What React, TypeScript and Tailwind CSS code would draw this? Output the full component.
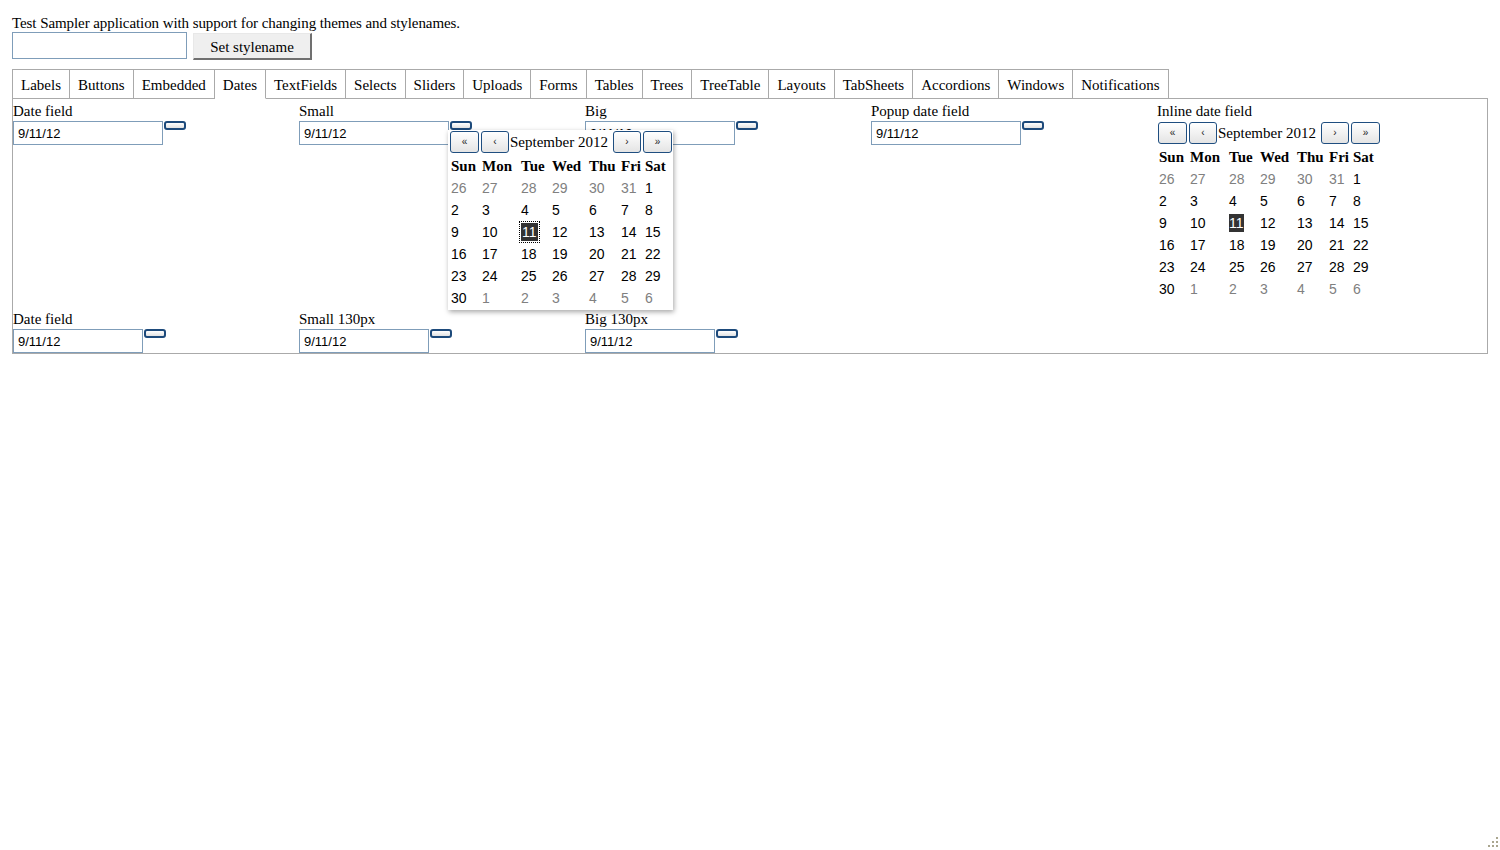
const tabs = [
  "Labels", "Buttons", "Embedded", "Dates", "TextFields", "Selects", "Sliders", "Uploads",
  "Forms", "Tables", "Trees", "TreeTable", "Layouts", "TabSheets", "Accordions", "Windows", "Notifications",
];

const dayNames = ["Sun", "Mon", "Tue", "Wed", "Thu", "Fri", "Sat"];
const colWidths = ["w-[31px]", "w-[39px]", "w-[31px]", "w-[37px]", "w-[32px]", "w-[24px]", "w-[26px]"];

type Day = { n: number; other?: boolean };

const weeks: Day[][] = [
  [26, 27, 28, 29, 30, 31].map((n) => ({ n, other: true })).concat([{ n: 1 }]),
  [2, 3, 4, 5, 6, 7, 8].map((n) => ({ n })),
  [9, 10, 11, 12, 13, 14, 15].map((n) => ({ n })),
  [16, 17, 18, 19, 20, 21, 22].map((n) => ({ n })),
  [23, 24, 25, 26, 27, 28, 29].map((n) => ({ n })),
  [{ n: 30 }].concat([1, 2, 3, 4, 5, 6].map((n) => ({ n, other: true }))),
];

const serif = "font-['Liberation_Serif',serif]";
const sans = "font-['Liberation_Sans',Arial,sans-serif]";

function NavButton({ label, wide }: { label: string; wide?: boolean }) {
  return (
    <button
      className={`${wide ? "w-[29px]" : "w-[28px]"} h-[22px] shrink-0 rounded-[3px] border border-[#1f4e80] bg-gradient-to-b from-white to-[#e4e4e4] flex items-center justify-center text-[10px] leading-none text-[#222] ${sans}`}
    >
      {label}
    </button>
  );
}

function TinyButton() {
  return (
    <button className="ml-[1px] w-[22px] h-[9px] rounded-[3px] border-2 border-[#1d4a7b] bg-gradient-to-b from-white to-[#e2e2e2]" />
  );
}

function DateInput({ width }: { width: string }) {
  return (
    <div className="flex items-start">
      <div
        className={`${width} h-[24px] border border-[#7f9db9] bg-white px-[4px] pt-[1px] flex items-center text-[13px] text-black ${sans}`}
      >
        9/11/12
      </div>
      <TinyButton />
    </div>
  );
}

function Calendar({ popup }: { popup?: boolean }) {
  return (
    <div className={popup ? "pl-[2px]" : "ml-[1px] mt-[1px]"}>
      <div className="flex items-center h-[22px]">
        <NavButton label="«" wide />
        <div className="ml-[2px]">
          <NavButton label="‹" />
        </div>
        <div className={`w-[104px] pl-[1px] text-[15px] leading-[22px] whitespace-nowrap overflow-hidden ${serif}`}>
          September 2012
        </div>
        <NavButton label="›" />
        <div className="ml-[2px]">
          <NavButton label="»" wide />
        </div>
      </div>
      <div className="ml-[1px]">
        <div className="flex h-[24px] items-center pt-[2px]">
          {dayNames.map((d, i) => (
            <div key={d} className={`${colWidths[i]} text-[15px] font-bold ${serif}`}>
              {d}
            </div>
          ))}
        </div>
        {weeks.map((week, wi) => (
          <div key={wi} className="flex h-[22px] items-center">
            {week.map((day, di) => {
              const selected = !day.other && day.n === 11;
              return (
                <div key={di} className={`${colWidths[di]} text-[14px] ${sans}`}>
                  {selected ? (
                    <span
                      className={`inline-block bg-[#333] text-white leading-[18px] ${
                        popup
                          ? "outline outline-1 outline-dotted outline-black outline-offset-[1px] px-[1px]"
                          : "px-[0px]"
                      }`}
                    >
                      {day.n}
                    </span>
                  ) : (
                    <span className={day.other ? "text-[#808080]" : "text-black"}>{day.n}</span>
                  )}
                </div>
              );
            })}
          </div>
        ))}
      </div>
    </div>
  );
}

function Field({ label, width, children }: { label: string; width: string; children?: React.ReactNode }) {
  return (
    <div className="relative">
      <div className={`h-[22px] pt-[2px] flex items-center text-[15px] ${serif}`}>{label}</div>
      <DateInput width={width} />
      {children}
    </div>
  );
}

function ResizeGrip() {
  const dots = [
    [9, 0], [5, 4], [9, 4], [1, 8], [5, 8], [9, 8],
  ];
  return (
    <svg width="12" height="11" viewBox="0 0 12 11" className="absolute right-[1px] bottom-[2px]">
      {dots.map(([x, y], i) => (
        <rect key={i} x={x} y={y} width="2" height="2" fill="#aaa68f" />
      ))}
    </svg>
  );
}

export default function App() {
  return (
    <div className={`relative h-[850px] bg-white text-black px-[12px] ${serif}`}>
      <div className="h-[32px] pt-[15px] text-[15px] leading-[17px] tracking-[-0.08px]">
        Test Sampler application with support for changing themes and stylenames.
      </div>
      <div className="flex items-start h-[28px]">
        <input className="w-[175px] h-[27px] border border-[#7f9db9] bg-white outline-none" />
        <button
          className={`ml-[6px] mt-[1px] w-[119px] h-[27px] pt-[2px] bg-[#efefef] border-t border-l border-t-[#e8e8e8] border-l-[#e8e8e8] border-r-2 border-b-2 border-r-[#707070] border-b-[#707070] text-[15px] ${serif}`}
        >
          Set stylename
        </button>
      </div>

      <div className="mt-[9px] flex">
        {tabs.map((t, i) => (
          <div
            key={t}
            className={`h-[30px] px-[8px] pt-[2px] flex items-center text-[15px] whitespace-nowrap border-t border-r border-[#aaa] ${
              i === 0 ? "border-l" : ""
            } ${t === "Dates" ? "border-b border-b-white" : "border-b"}`}
          >
            {t}
          </div>
        ))}
        <div className="flex-1 h-[30px] border-b border-[#aaa]" />
      </div>

      <div className="border-x border-b border-[#aaa] w-[1476px]">
        <div className="grid grid-cols-[286px_286px_286px_286px_1fr] h-[208px]">
          <Field label="Date field" width="w-[150px]" />
          <Field label="Small" width="w-[150px]">
            <div className="absolute left-[149px] top-[31px] z-10 w-[225px] h-[180px] bg-white shadow-[1px_2px_5px_rgba(0,0,0,0.35)] pt-[1px]">
              <Calendar popup />
            </div>
          </Field>
          <Field label="Big" width="w-[150px]" />
          <Field label="Popup date field" width="w-[150px]" />
          <div>
            <div className={`h-[22px] pt-[2px] flex items-center text-[15px] ${serif}`}>Inline date field</div>
            <Calendar />
          </div>
        </div>
        <div className="grid grid-cols-[286px_286px_286px_286px_1fr]">
          <Field label="Date field" width="w-[130px]" />
          <Field label="Small 130px" width="w-[130px]" />
          <Field label="Big 130px" width="w-[130px]" />
        </div>
      </div>

      <ResizeGrip />
    </div>
  );
}
